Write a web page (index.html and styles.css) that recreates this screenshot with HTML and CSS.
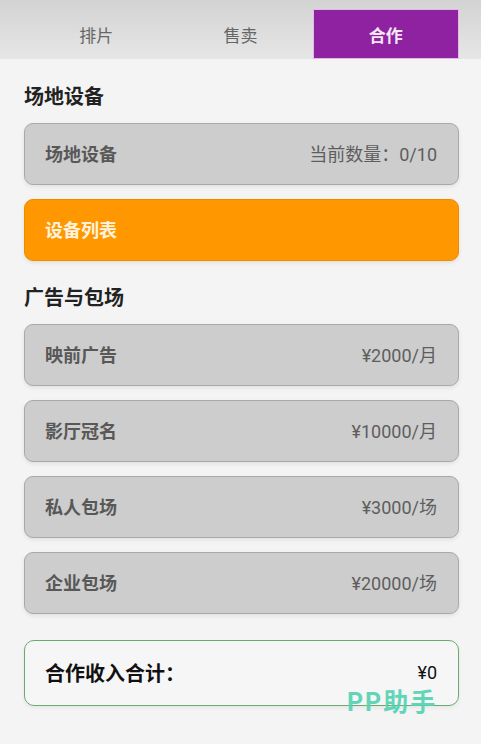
FILE: index.html
```html
<!DOCTYPE html>
<html lang="zh">
<head>
<meta charset="utf-8">
<link rel="stylesheet" href="styles.css">
</head>
<body>
<div class="page">
  <div class="tabs">
    <div class="tab">排片</div>
    <div class="tab">售卖</div>
    <div class="tab active">合作</div>
  </div>
  <div class="content">
    <h2 class="section-title">场地设备</h2>
    <div class="card"><span class="label">场地设备</span><span class="value">当前数量：0/10</span></div>
    <div class="card orange"><span class="label">设备列表</span></div>
    <h2 class="section-title second">广告与包场</h2>
    <div class="card"><span class="label">映前广告</span><span class="value">¥2000/月</span></div>
    <div class="card"><span class="label">影厅冠名</span><span class="value">¥10000/月</span></div>
    <div class="card"><span class="label">私人包场</span><span class="value">¥3000/场</span></div>
    <div class="card"><span class="label">企业包场</span><span class="value">¥20000/场</span></div>
    <div class="total"><span class="total-label">合作收入合计：</span><span class="total-value">¥0</span></div>
  </div>
  <div class="watermark">PP助手</div>
</div>
</body>
</html>
```
FILE: styles.css
```css
* { box-sizing: border-box; }
html, body { margin: 0; padding: 0; }
body {
  background: #f4f4f4;
  font-family: Roboto, "Noto Sans CJK SC", "Noto Sans", sans-serif;
  width: 481px;
  height: 744px;
  overflow: hidden;
}
.page { position: relative; height: 744px; }
.tabs {
  display: flex;
  padding: 9px 22px 0 24px;
  height: 59px;
  background: linear-gradient(#d3d3d3, #e6e6e6);
}
.tab {
  flex: 1;
  height: 50px;
  display: flex;
  align-items: center;
  justify-content: center;
  font-size: 17px;
  color: #666;
}
.tab.active {
  background: #8e22a0;
  color: #f6e6f6;
  font-weight: 700;
  border: 1px solid #e2b8e6;
}
.content {
  padding: 0 22px 0 24px;
  display: flex;
  flex-direction: column;
}
.section-title {
  margin: 24px 0 12px;
  font-size: 20px;
  line-height: 28px;
  font-weight: 700;
  color: #222;
}
.section-title.second { margin-top: 9px; margin-bottom: 12px; }
.card {
  height: 62px;
  background: #cdcdcd;
  border: 1px solid #a9a9a9;
  border-radius: 9px;
  display: flex;
  align-items: center;
  justify-content: space-between;
  padding: 0 21px 2px 20px;
  margin-bottom: 14px;
  box-shadow: 0 2px 4px rgba(0,0,0,0.08);
  color: #585858;
  font-size: 18px;
}
.card .label { font-weight: 700; }
.card .value { font-weight: 400; color: #5e5e5e; }
.card.orange {
  background: #ff9800;
  border-color: #f08a00;
  color: #fff3df;
}
.total {
  margin-top: 12px;
  height: 66px;
  border: 1px solid #6aaa70;
  border-radius: 10px;
  background: #f6f6f6;
  display: flex;
  align-items: center;
  justify-content: space-between;
  padding: 0 21px 2px 20px;
  box-shadow: 0 2px 4px rgba(0,0,0,0.06);
}
.total-label { font-size: 20px; font-weight: 700; color: #111; }
.total-value { font-size: 18px; color: #111; }
.watermark {
  position: absolute;
  left: 347px;
  top: 682px;
  font-size: 25px;
  font-weight: 700;
  color: #52d2b2;
  letter-spacing: 2px;
  opacity: 0.9;
}
```
